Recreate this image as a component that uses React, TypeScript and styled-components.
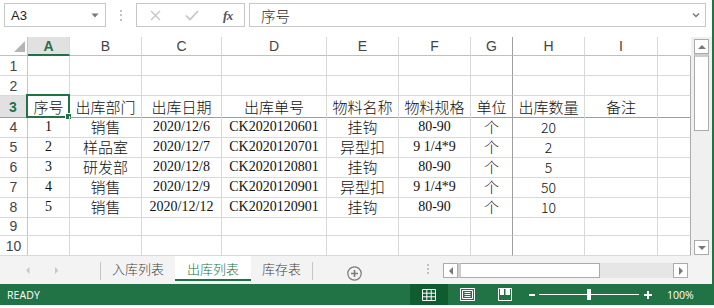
import React from 'react';
import styled, { createGlobalStyle, css } from 'styled-components';

const GREEN = '#217346';
const GRID = '#d9d9d9';
const FREEZE = '#9f9f9f';
const CJK = '"Noto Sans CJK SC", "Noto Sans", sans-serif';
const SERIF = '"Liberation Serif", "Noto Sans CJK SC", serif';
const UI = '"Open Sans", "Liberation Sans", sans-serif';

const GlobalStyle = createGlobalStyle`
  html, body { margin: 0; padding: 0; background: #fff; }
  body { width: 714px; height: 308px; overflow: hidden; font-family: ${CJK}; }
  * { box-sizing: border-box; }
`;

const Window = styled.div`
  width: 714px;
  height: 308px;
  display: flex;
  flex-direction: column;
  background: #fff;
  overflow: hidden;
`;

const Frame = styled.div`
  height: 284px;
  display: flex;
  flex-direction: column;
  border-right: 2px solid ${GREEN};
`;

/* ---------- formula bar ---------- */
const FormulaBar = styled.div`
  height: 37px;
  display: flex;
  align-items: flex-start;
  padding: 3px 0 0 4px;
`;

const NameBox = styled.div`
  width: 102px;
  height: 24px;
  border: 1px solid #c6c6c6;
  display: flex;
  align-items: center;
  justify-content: space-between;
  padding: 0 6px 0 6px;
  font: 13px "Liberation Sans", sans-serif;
  color: #222;
`;

const Grip = styled.div`
  width: 30px;
  height: 24px;
  display: flex;
  flex-direction: column;
  align-items: center;
  justify-content: center;
  gap: 2.5px;
  span { width: 2px; height: 2px; background: #c2c2c2; display: block; }
`;

const FxBox = styled.div`
  width: 109px;
  height: 24px;
  border: 1px solid #c6c6c6;
  display: flex;
  align-items: center;
  padding-left: 13px;
  gap: 24px;
`;

const FxText = styled.span`
  font: italic bold 13px "Liberation Serif", serif;
  color: #555;
  letter-spacing: -0.5px;
  line-height: 1;
`;

const FormulaInput = styled.div`
  margin-left: 4px;
  width: 457px;
  height: 24px;
  border: 1px solid #c6c6c6;
  display: flex;
  align-items: center;
  justify-content: space-between;
  padding: 0 5px 0 11px;
  font: 300 14.5px ${CJK};
  color: #222;
`;

/* ---------- sheet ---------- */
const Main = styled.div`
  height: 219px;
  display: flex;
`;

const Sheet = styled.div`
  width: 691px;
  display: flex;
  flex-direction: column;
`;

const COLS = '28px 42px 72px 80px 105px 72px 72px 42px 72px 73px 33px';

const Row = styled.div<{ $h: number }>`
  display: grid;
  grid-template-columns: ${COLS};
  height: ${(p) => p.$h}px;
`;

const Corner = styled.div`
  border-right: 1px solid #c6c6c6;
  border-bottom: 1px solid #c0c0c0;
  display: flex;
  align-items: flex-end;
  justify-content: flex-end;
  padding: 0 2px 3px 0;
`;

const ColHead = styled.div<{ $sel?: boolean; $freeze?: boolean; $last?: boolean }>`
  display: flex;
  align-items: center;
  justify-content: center;
  font: 14px "Liberation Sans", sans-serif;
  color: #444;
  border-right: 1px solid ${(p) => (p.$freeze ? FREEZE : p.$last ? 'transparent' : GRID)};
  border-bottom: 1px solid #c0c0c0;
  ${(p) =>
    p.$sel &&
    css`
      background: #e1e1e1;
      color: ${GREEN};
      font-weight: bold;
      border-bottom: 2px solid ${GREEN};
      padding-top: 1px;
    `}
`;

const RowHead = styled.div<{ $sel?: boolean; $freeze?: boolean }>`
  display: flex;
  align-items: center;
  justify-content: center;
  font: 14px "Liberation Sans", sans-serif;
  color: #444;
  border-right: 1px solid #c6c6c6;
  border-bottom: 1px solid ${(p) => (p.$freeze ? FREEZE : GRID)};
  ${(p) =>
    p.$sel &&
    css`
      background: #e1e1e1;
      color: ${GREEN};
      font-weight: bold;
      border-right: 2px solid ${GREEN};
    `}
`;

type Kind = 'cjk' | 'serif' | 'sans';

const Cell = styled.div<{ $kind: Kind; $freezeR?: boolean; $freezeB?: boolean; $last?: boolean }>`
  position: relative;
  display: flex;
  align-items: center;
  justify-content: center;
  white-space: nowrap;
  color: #111;
  font-family: ${(p) => (p.$kind === 'serif' ? SERIF : CJK)};
  font-weight: ${(p) => (p.$kind === 'serif' ? 400 : 300)};
  font-size: ${(p) => (p.$kind === 'serif' ? '14px' : p.$kind === 'sans' ? '14px' : '15px')};
  border-right: 1px solid ${(p) => (p.$freezeR ? FREEZE : p.$last ? '#ababab' : GRID)};
  border-bottom: 1px solid ${(p) => (p.$freezeB ? FREEZE : GRID)};
`;

const ActiveFrame = styled.div`
  position: absolute;
  left: -2px;
  top: -2px;
  right: -1px;
  bottom: -1px;
  border: 2px solid ${GREEN};
  pointer-events: none;
`;

const FillHandle = styled.div`
  position: absolute;
  right: -4px;
  bottom: -4px;
  width: 7px;
  height: 7px;
  background: ${GREEN};
  border: 1px solid #fff;
`;

/* ---------- vertical scrollbar ---------- */
const RightRail = styled.div`
  width: 21px;
  background: #f0f0f0;
  padding: 2px 3px 1px 3px;
  display: flex;
  flex-direction: column;
`;

const ScrollBtn = styled.div`
  width: 15px;
  height: 15px;
  flex: none;
  background: #fff;
  border: 1px solid #ababab;
  display: flex;
  align-items: center;
  justify-content: center;
`;

const VThumb = styled.div`
  height: 77px;
  background: #fff;
  border: 1px solid #ababab;
  border-top: 3px solid #cdcdcd;
  flex: none;
`;

const Fill = styled.div`
  flex: 1;
`;

/* ---------- tabs ---------- */
const TabBar = styled.div`
  height: 28px;
  background: #f3f3f3;
  display: flex;
  align-items: flex-start;
`;

const NavArrows = styled.div`
  width: 100px;
  height: 28px;
  display: flex;
  align-items: center;
  padding-left: 26px;
  gap: 25px;
`;

const VSep = styled.div`
  width: 1px;
  height: 18px;
  margin-top: 6px;
  background: #c6c6c6;
`;

const Tab = styled.div<{ $active?: boolean }>`
  height: 25px;
  padding: 0 11px;
  display: flex;
  align-items: center;
  font: 300 13px ${CJK};
  color: #444;
  ${(p) =>
    p.$active &&
    css`
      background: #fff;
      color: ${GREEN};
      border-bottom: 2px solid ${GREEN};
      padding: 2px 12px 0 12px;
    `}
`;

const AddSheet = styled.div`
  margin: 6px 0 0 34px;
  width: 15px;
  height: 15px;
`;

const TabGrip = styled.div`
  margin: 8px 0 0 65px;
  display: flex;
  flex-direction: column;
  gap: 2px;
  span { width: 2px; height: 2px; background: #c2c2c2; display: block; }
`;

const HScroll = styled.div`
  margin: 7px 0 0 14px;
  width: 245px;
  height: 15px;
  display: flex;
  background: #e6e6e6;
`;

const HThumb = styled.div`
  width: 142px;
  height: 15px;
  background: #fff;
  border: 1px solid #ababab;
  border-left: 3px solid #cdcdcd;
`;

/* ---------- status bar ---------- */
const StatusBar = styled.div`
  height: 21px;
  background: ${GREEN};
  display: flex;
  align-items: stretch;
  color: #fff;
  font: 10.5px ${UI};
`;

const Ready = styled.div`
  flex: 1;
  display: flex;
  align-items: center;
  padding-left: 7px;
  letter-spacing: 0.1px;
`;

const ViewBtn = styled.div<{ $on?: boolean }>`
  width: 38px;
  display: flex;
  align-items: center;
  justify-content: center;
  background: ${(p) => (p.$on ? '#0e5c2f' : 'transparent')};
`;

const ZoomGroup = styled.div`
  display: flex;
  align-items: center;
  padding-left: 5px;
`;

const ZoomTrack = styled.div`
  position: relative;
  width: 100px;
  height: 1px;
  background: #fff;
  margin: 0 5px 0 4px;
`;

const ZoomThumb = styled.div`
  position: absolute;
  left: 48px;
  top: -5px;
  width: 4px;
  height: 11px;
  background: #fff;
`;

const ZoomPct = styled.div`
  margin-left: 15px;
  width: 47px;
`;

const Bottom = styled.div`
  flex: 1;
  background: #fff;
`;

/* ---------- icons ---------- */
const Caret = () => (
  <svg width="8" height="5" viewBox="0 0 8 5"><path d="M0.5 0.5h7L4 4.5z" fill="#777" /></svg>
);

const Chevron = () => (
  <svg width="8" height="6" viewBox="0 0 8 6"><path d="M1 1.5L4 4.5L7 1.5" stroke="#777" strokeWidth="1.4" fill="none" /></svg>
);

const CrossIcon = () => (
  <svg width="11" height="11" viewBox="0 0 11 11"><path d="M1 1L10 10M10 1L1 10" stroke="#c4c4c4" strokeWidth="1.3" /></svg>
);

const CheckIcon = () => (
  <svg width="14" height="11" viewBox="0 0 14 11"><path d="M1 5.5L5 9.5L13 1" stroke="#c4c4c4" strokeWidth="1.6" fill="none" /></svg>
);

const SelectAll = () => (
  <svg width="11" height="11" viewBox="0 0 11 11"><path d="M11 0V11H0z" fill="#b5b5b5" /></svg>
);

const Tri = ({ dir, color = '#777', size = 4 }: { dir: 'up' | 'down' | 'left' | 'right'; color?: string; size?: number }) => {
  const s = size;
  const d =
    dir === 'up'
      ? `M0 ${s}H${2 * s}L${s} 0z`
      : dir === 'down'
      ? `M0 0H${2 * s}L${s} ${s}z`
      : dir === 'left'
      ? `M${s} 0V${2 * s}L0 ${s}z`
      : `M0 0V${2 * s}L${s} ${s}z`;
  const w = dir === 'up' || dir === 'down' ? 2 * s : s;
  const h = dir === 'up' || dir === 'down' ? s : 2 * s;
  return (
    <svg width={w} height={h} viewBox={`0 0 ${w} ${h}`}><path d={d} fill={color} /></svg>
  );
};

const PlusCircle = () => (
  <svg width="15" height="15" viewBox="0 0 15 15">
    <circle cx="7.5" cy="7.5" r="6.7" stroke="#7a7a7a" strokeWidth="1.2" fill="none" />
    <path d="M7.5 4v7M4 7.5h7" stroke="#7a7a7a" strokeWidth="1.6" />
  </svg>
);

const NormalIcon = () => (
  <svg width="14" height="12" viewBox="0 0 14 12">
    <path d="M0.5 0.5h13v11h-13zM0.5 4.2h13M0.5 7.8h13M4.8 0.5v11M9.2 0.5v11" stroke="#fff" strokeWidth="1" fill="none" />
  </svg>
);

const LayoutIcon = () => (
  <svg width="15" height="13" viewBox="0 0 15 13">
    <path d="M0.5 0.5h14v12h-14z" stroke="#fff" strokeWidth="1" fill="none" />
    <path d="M2.5 2.5h10v8h-10z" stroke="#fff" strokeWidth="1" fill="none" />
    <path d="M4.5 4.5h6M4.5 6.5h6M4.5 8.5h6" stroke="#fff" strokeWidth="1" />
  </svg>
);

const BreakIcon = () => (
  <svg width="14" height="13" viewBox="0 0 14 13">
    <path d="M0.5 0.5h13v12h-13z" stroke="#fff" strokeWidth="1" fill="none" />
    <path d="M2 1h4v6h-4zM7.5 1h4.5v6h-4.5z" fill="#fff" />
  </svg>
);

const Minus = () => (
  <svg width="6" height="2" viewBox="0 0 6 2"><rect width="6" height="2" fill="#fff" /></svg>
);

const Plus = () => (
  <svg width="8" height="8" viewBox="0 0 8 8"><path d="M0 3h8v2H0zM3 0h2v8H3z" fill="#fff" /></svg>
);

/* ---------- data ---------- */
const HEAD = ['A', 'B', 'C', 'D', 'E', 'F', 'G', 'H', 'I', ''];
const KINDS: Kind[] = ['serif', 'cjk', 'serif', 'serif', 'cjk', 'serif', 'cjk', 'sans', 'cjk', 'cjk'];

const ROWS: (string | number)[][] = [
  [],
  [],
  ['序号', '出库部门', '出库日期', '出库单号', '物料名称', '物料规格', '单位', '出库数量', '备注'],
  [1, '销售', '2020/12/6', 'CK2020120601', '挂钩', '80-90', '个', '20'],
  [2, '样品室', '2020/12/7', 'CK2020120701', '异型扣', '9 1/4*9', '个', '2'],
  [3, '研发部', '2020/12/8', 'CK2020120801', '挂钩', '80-90', '个', '5'],
  [4, '销售', '2020/12/9', 'CK2020120901', '异型扣', '9 1/4*9', '个', '50'],
  [5, '销售', '2020/12/12', 'CK2020120901', '挂钩', '80-90', '个', '10'],
  [],
  [],
];

export default function App() {
  return (
    <>
      <GlobalStyle />
      <Window>
        <Frame>
          <FormulaBar>
            <NameBox>
              <span>A3</span>
              <Caret />
            </NameBox>
            <Grip>
              <span />
              <span />
              <span />
            </Grip>
            <FxBox>
              <CrossIcon />
              <CheckIcon />
              <FxText>fx</FxText>
            </FxBox>
            <FormulaInput>
              <span>序号</span>
              <Chevron />
            </FormulaInput>
          </FormulaBar>

          <Main>
            <Sheet>
              <Row $h={19}>
                <Corner>
                  <SelectAll />
                </Corner>
                {HEAD.map((h, i) => (
                  <ColHead key={i} $sel={i === 0} $freeze={i === 6} $last={i === 9}>
                    {h}
                  </ColHead>
                ))}
              </Row>
              {ROWS.map((r, ri) => (
                <Row $h={20} key={ri}>
                  <RowHead $sel={ri === 2} $freeze={ri === 2}>
                    {ri + 1}
                  </RowHead>
                  {HEAD.map((_, ci) => (
                    <Cell
                      key={ci}
                      $kind={ri === 2 ? 'cjk' : KINDS[ci]}
                      $freezeR={ci === 6}
                      $freezeB={ri === 2}
                      $last={ci === 9}
                    >
                      {r[ci] ?? ''}
                      {ri === 2 && ci === 0 && (
                        <ActiveFrame>
                          <FillHandle />
                        </ActiveFrame>
                      )}
                    </Cell>
                  ))}
                </Row>
              ))}
            </Sheet>
            <RightRail>
              <ScrollBtn>
                <Tri dir="up" />
              </ScrollBtn>
              <VThumb />
              <Fill />
              <ScrollBtn>
                <Tri dir="down" />
              </ScrollBtn>
            </RightRail>
          </Main>

          <TabBar>
            <NavArrows>
              <Tri dir="left" color="#c8c8c8" size={3.5} />
              <Tri dir="right" color="#c8c8c8" size={3.5} />
            </NavArrows>
            <VSep />
            <Tab>入库列表</Tab>
            <Tab $active>出库列表</Tab>
            <Tab>库存表</Tab>
            <VSep />
            <AddSheet>
              <PlusCircle />
            </AddSheet>
            <TabGrip>
              <span />
              <span />
              <span />
            </TabGrip>
            <HScroll>
              <ScrollBtn>
                <Tri dir="left" />
              </ScrollBtn>
              <HThumb />
              <Fill />
              <ScrollBtn>
                <Tri dir="right" />
              </ScrollBtn>
            </HScroll>
          </TabBar>
        </Frame>

        <StatusBar>
          <Ready>READY</Ready>
          <ViewBtn $on>
            <NormalIcon />
          </ViewBtn>
          <ViewBtn>
            <LayoutIcon />
          </ViewBtn>
          <ViewBtn>
            <BreakIcon />
          </ViewBtn>
          <ZoomGroup>
            <Minus />
            <ZoomTrack>
              <ZoomThumb />
            </ZoomTrack>
            <Plus />
            <ZoomPct>100%</ZoomPct>
          </ZoomGroup>
        </StatusBar>
        <Bottom />
      </Window>
    </>
  );
}
